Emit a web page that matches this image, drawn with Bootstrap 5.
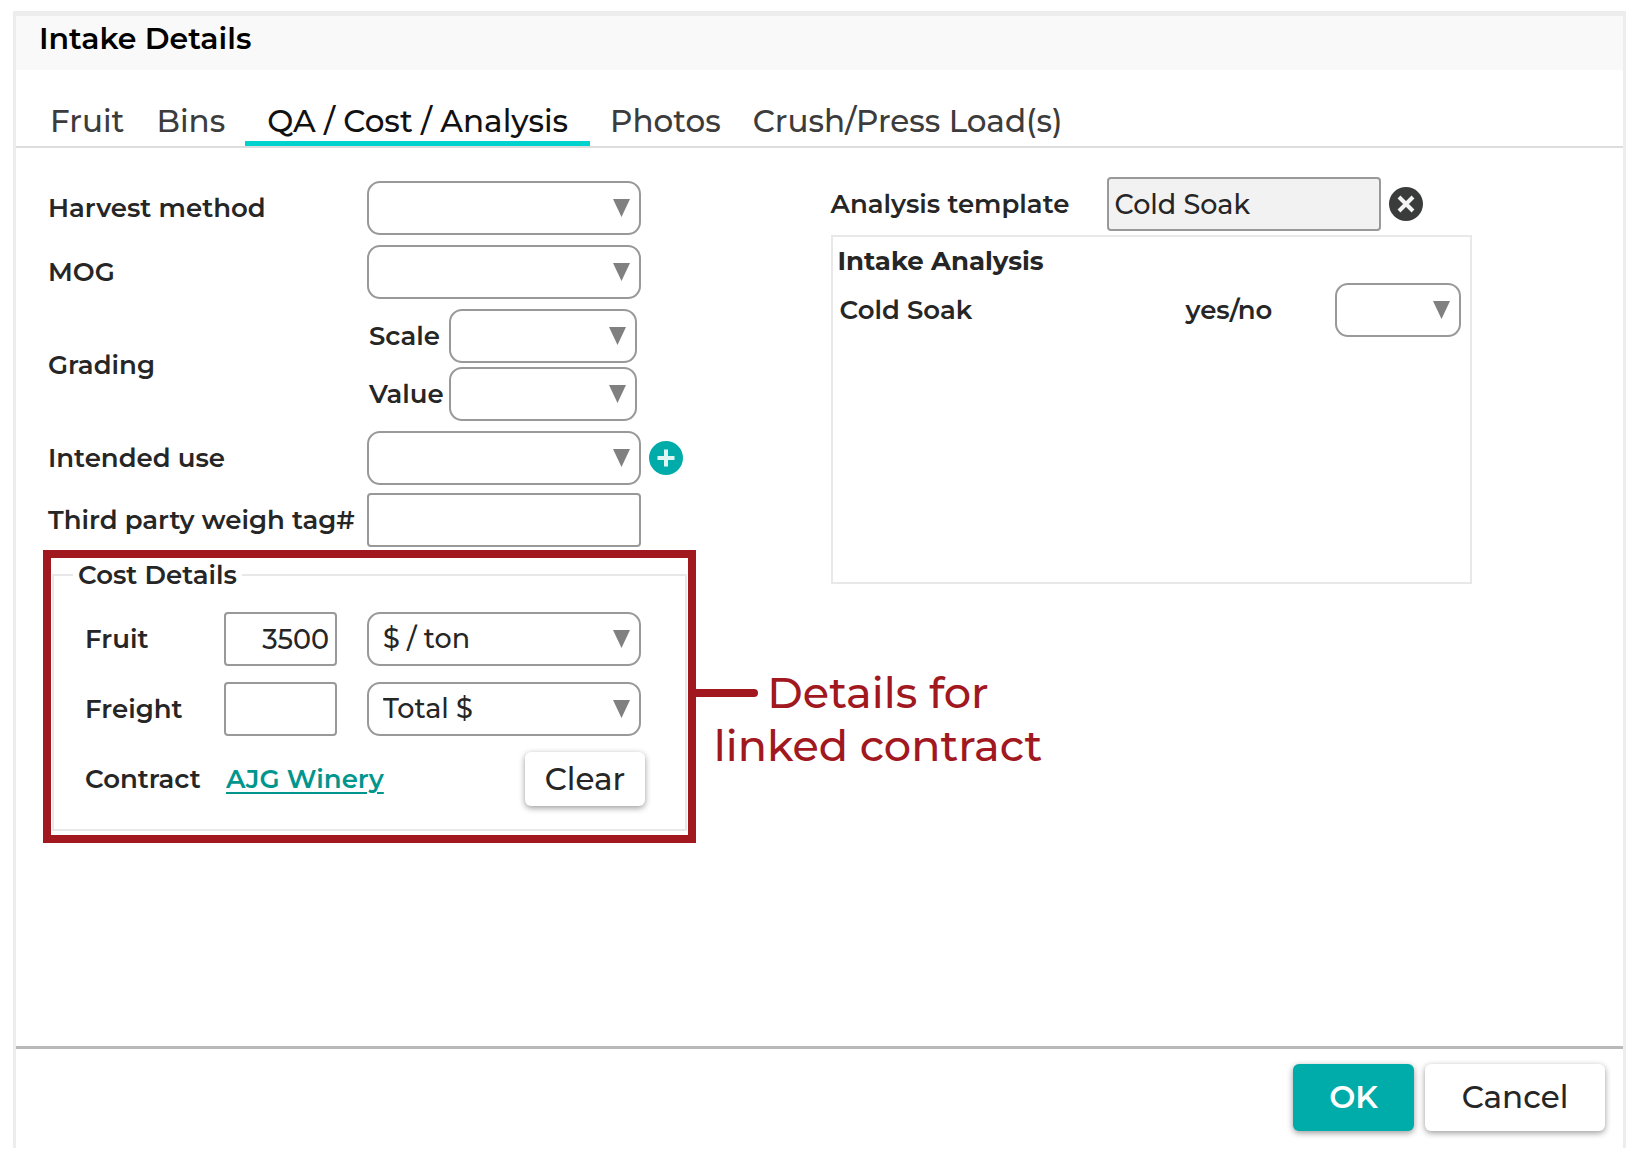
<!DOCTYPE html>
<html lang="en">
<head>
<meta charset="utf-8">
<meta name="viewport" content="width=device-width, initial-scale=1">
<title>Intake Details</title>
<link href="https://cdn.jsdelivr.net/npm/bootstrap@5.3.0/dist/css/bootstrap.min.css" rel="stylesheet">
<style>
  body { font-family: Montserrat, Inter, "Open Sans", sans-serif; font-size: 26px; line-height: 32px; font-weight: 600; color: #262626; background: #fff; }
  .dialog-frame { margin: 11px 6px 15px 13px; border: 3px solid #ededed; border-top-width: 5px; border-bottom: 0; }
  .dialog-title { background: #f9f9f9; height: 54px; padding: 6px 23px; font-size: 30px; line-height: 34px; font-weight: 600; color: #000; }
  .dialog-tabs { padding: 25px 22px 0; gap: 8px; border-bottom: 2px solid #ddd; }
  .dialog-tabs .nav-link { padding: 9px 12px 3px; font-size: 31px; line-height: 34px; font-weight: 500; color: #3c3c3c; border-bottom: 5px solid transparent; }
  .dialog-tabs .nav-link.active { padding-left: 22px; padding-right: 22px; color: #111; border-color: #00d2cd; }
  .form-pane { padding: 33px 12px 0 32px; }
  .analysis-pane { padding: 29px 12px 0 11px; }
  .field-label { width: 319px; flex: none; white-space: nowrap; }
  .field-line { margin-bottom: 10px; }
  .sub-label { width: 82px; padding-left: 2px; white-space: nowrap; }
  .ctl { height: 54px; width: 274px; border: 2px solid #999; border-radius: 4px; padding: 0 6px; font-size: 27px; line-height: 32px; font-weight: 500; color: #262626; box-shadow: none; }
  .ctl:disabled { background: #f2f2f2; color: #262626; opacity: 1; }
  select.ctl { border-radius: 13px; padding: 0 40px 0 14px; background: #fff url("data:image/svg+xml,%3Csvg xmlns='http://www.w3.org/2000/svg' viewBox='0 0 17 18'%3E%3Cpath fill='%23808080' d='M0 0H17L8.500 18Z'/%3E%3C/svg%3E") no-repeat right 9px center / 17px 18px; }
  select.ctl-mid { width: 188px; }
  select.ctl-short { width: 126px; }
  .ctl-num { width: 113px; text-align: right; }
  .icon-btn { width: 34px; height: 34px; padding: 0; border: 0; background: none; display: flex; }
  .callout-box { border: 8px solid #a1181f; width: 653px; margin: 3px 0 0 -5px; padding: 1px 1px 4px; }
  .cost-set { border: 2px solid #e8e8e8; margin: 0; padding: 21px 40px 23px 31px; }
  .cost-set legend { float: none; width: auto; font-size: 26px; line-height: 32px; margin: 0 0 0 -12px; padding: 0 5px; }
  .cost-label { width: 139px; flex: none; }
  .callout-line { left: 100%; top: 131px; width: 62px; height: 8px; margin-left: 8px; border-radius: 0 4px 4px 0; background: #a1181f; }
  .callout-text { left: 100%; top: 108px; margin-left: 22px; width: 336px; text-align: center; font-size: 43px; line-height: 53px; font-weight: 500; color: #a1181f; }
  .callout-text span { display: block; white-space: nowrap; }
  .link-teal { margin-left: 2px; color: #00968d; text-underline-offset: 4px; text-decoration-thickness: 2px; }
  .btn-flat { font-size: 31px; line-height: 35px; font-weight: 500; border: 0; border-radius: 6px; box-shadow: 0 2px 6px rgba(0,0,0,.4); background: #fff; color: #262626; padding: 10px 0 9px; width: 120px; }
  .btn-foot { padding: 16px 0; width: 180px; }
  .btn-ok { width: 121px; background: #00aca9; color: #fff; font-weight: 600; }
  .analysis-label { width: 276px; }
  .analysis-box { border: 2px solid #e8e8e8; width: 641px; height: 349px; margin-top: 4px; padding: 8px 9px 0 5px; }
  .analysis-head { font-size: 26px; line-height: 32px; font-weight: 700; }
  .analysis-line { margin-top: 6px; padding-left: 2px; }
  .analysis-name { width: 346px; }
  .dialog-foot { border-top: 3px solid #b9b9b9; padding: 15px 18px 17px; gap: 11px; }
</style>
</head>
<body class="min-vh-100 d-flex flex-column">
<main class="dialog-frame flex-grow-1 d-flex flex-column">
  <h1 class="dialog-title mb-0">Intake Details</h1>
  <nav class="nav dialog-tabs">
    <a class="nav-link" href="#">Fruit</a>
    <a class="nav-link" href="#">Bins</a>
    <a class="nav-link active" aria-current="page" href="#">QA / Cost / Analysis</a>
    <a class="nav-link" href="#">Photos</a>
    <a class="nav-link" href="#">Crush/Press Load(s)</a>
  </nav>
  <form class="flex-grow-1 d-flex flex-column">
    <div class="row g-0 flex-grow-1">
      <div class="col-6 form-pane">
        <div class="field-line d-flex align-items-center">
          <label class="field-label" for="harvest">Harvest method</label>
          <select class="form-select ctl" id="harvest"><option></option></select>
        </div>
        <div class="field-line d-flex align-items-center">
          <label class="field-label" for="mog">MOG</label>
          <select class="form-select ctl" id="mog"><option></option></select>
        </div>
        <div class="field-line d-flex align-items-center" role="group" aria-labelledby="grading">
          <span class="field-label" id="grading">Grading</span>
          <div class="d-flex flex-column gap-1">
            <div class="d-flex align-items-center">
              <label class="sub-label" for="scale">Scale</label>
              <select class="form-select ctl ctl-mid" id="scale"><option></option></select>
            </div>
            <div class="d-flex align-items-center">
              <label class="sub-label" for="value">Value</label>
              <select class="form-select ctl ctl-mid" id="value"><option></option></select>
            </div>
          </div>
        </div>
        <div class="d-flex align-items-center mb-2">
          <label class="field-label" for="use">Intended use</label>
          <select class="form-select ctl" id="use"><option></option></select>
          <button class="icon-btn ms-2" type="button" aria-label="Add intended use">
            <svg width="34" height="34" viewBox="0 0 34 34"><circle cx="17" cy="17" r="17" fill="#00aca9"/><path d="M17 8.500V25.500M8.500 17H25.500" stroke="#dff5f4" stroke-width="4"/></svg>
          </button>
        </div>
        <div class="d-flex align-items-center">
          <label class="field-label" for="tag">Third party weigh tag#</label>
          <input class="form-control ctl" id="tag" type="text">
        </div>
        <div class="callout-box position-relative">
          <fieldset class="cost-set">
            <legend>Cost Details</legend>
            <div class="d-flex align-items-center mb-3">
              <label class="cost-label" for="fruit">Fruit</label>
              <input class="form-control ctl ctl-num" id="fruit" type="text" value="3500">
              <select class="form-select ctl ms-auto me-1" aria-label="Fruit cost unit"><option>$ / ton</option></select>
            </div>
            <div class="d-flex align-items-center mb-3">
              <label class="cost-label" for="freight">Freight</label>
              <input class="form-control ctl ctl-num" id="freight" type="text">
              <select class="form-select ctl ms-auto me-1" aria-label="Freight cost unit"><option>Total $</option></select>
            </div>
            <div class="d-flex align-items-center">
              <span class="cost-label">Contract</span>
              <a class="link-teal" href="#">AJG Winery</a>
              <button class="btn btn-flat ms-auto" type="button">Clear</button>
            </div>
          </fieldset>
          <div class="callout-line position-absolute"></div>
          <div class="callout-text position-absolute"><span>Details for</span><span>linked contract</span></div>
        </div>
      </div>
      <div class="col-6 analysis-pane">
        <div class="d-flex align-items-center">
          <label for="template" class="flex-shrink-0 analysis-label">Analysis template</label>
          <input class="form-control ctl" id="template" type="text" value="Cold Soak" disabled>
          <button class="icon-btn ms-2" type="button" aria-label="Remove template">
            <svg width="34" height="34" viewBox="0 0 34 34"><circle cx="17" cy="17" r="17" fill="#3a3c3c"/><path d="M10 10L24 24M24 10L10 24" stroke="#f4f4f4" stroke-width="4"/></svg>
          </button>
        </div>
        <section class="analysis-box">
          <h2 class="analysis-head mb-0">Intake Analysis</h2>
          <div class="analysis-line d-flex align-items-center">
            <label class="analysis-name" for="soak">Cold Soak</label>
            <span>yes/no</span>
            <select class="form-select ctl ctl-short ms-auto" id="soak"><option></option></select>
          </div>
        </section>
      </div>
    </div>
    <footer class="dialog-foot d-flex justify-content-end">
      <button class="btn btn-flat btn-foot btn-ok" type="button">OK</button>
      <button class="btn btn-flat btn-foot" type="button">Cancel</button>
    </footer>
  </form>
</main>
<script src="https://cdn.jsdelivr.net/npm/bootstrap@5.3.0/dist/js/bootstrap.bundle.min.js"></script>
</body>
</html>
